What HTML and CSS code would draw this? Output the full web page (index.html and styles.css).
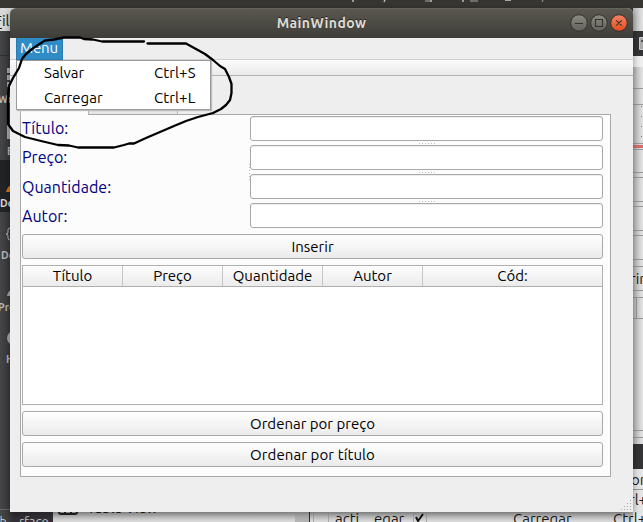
FILE: index.html
```html
<!DOCTYPE html>
<html lang="pt">
<head>
<meta charset="utf-8">
<title>MainWindow</title>
<link rel="stylesheet" href="styles.css">
</head>
<body>
<div class="desktop">
  <svg class="backdrop" width="643" height="522" viewBox="0 0 643 522">
    <defs>
      <linearGradient id="modes"><stop offset="0" stop-color="#454648"/><stop offset="1" stop-color="#353638"/></linearGradient>
      <linearGradient id="side"><stop offset="0" stop-color="#b7b7b7"/><stop offset="1" stop-color="#e4e4e4"/></linearGradient>
      <linearGradient id="under" x2="0" y2="1"><stop offset="0" stop-color="#aaa"/><stop offset="1" stop-color="#dedede"/></linearGradient>
    </defs>
    <rect width="643" height="522" fill="#373632"/>
    <path d="M353 0v2M385 0l-1 2M431 0v2M463 0v2" stroke="#bbb" stroke-width="1.500"/>
    <path d="M425 1h7M470 1h8M505 .5h6M543 0l-1 2" stroke="#a6a6a0"/>
    <path fill="#d8d8d8" d="M0 8h20v23H0z"/>
    <text x="-6" y="26" class="menu-text">File</text><path d="M0 28.500h2" stroke="#111"/>
    <path fill="url(#modes)" d="M0 31h12v491H0z"/>
    <path d="M0 55.500h10" stroke="#303133"/>
    <path fill="#222325" d="M0 160h12v52H0z"/>
    <path fill="#aaa" d="M7 68h4v5H7zM7 75h4v5H7zM7 82h4v5H7zM7 125h4v14H7z"/>
    <path fill="#d87613" d="M6 192q2-7 6-7v7z"/>
    <path fill="#a8a8a8" d="M7 296q1-5 4-6v6z"/>
    <circle cx="14" cy="338" r="7" fill="#aaa"/>
    <g class="mode-text">
      <text x="-2" y="103">We</text><text x="7" y="155">E</text><text x="0" y="207" fill="#ddd">De</text>
      <text x="1" y="259">De</text><text x="-2" y="311">Pro</text><text x="6" y="363">H</text>
      <path d="M10 228q-2 0-2 2v2q0 2-2 2 2 0 2 2v2q0 2 2 2" fill="none" stroke="#b8b8b8"/>
    </g>
    <path fill="url(#side)" d="M633 8h10v514h-10z"/>
    <path fill="#343436" d="M633 31h10v25h-10zM633 444h10v25h-10z"/>
    <path d="M639.500 37.500h5v12h-5z" fill="#aaa" stroke="#ccc"/><path d="M641 41h2" stroke="#555" stroke-width="2"/>
    <path fill="#eee" d="M633 56h10v11h-10z"/>
    <path stroke="#999" fill="none" d="M633 88.500h10M633 104.500h10M633 143.500h10M633 149.500h10M633 172.500h10M633 177.500h10M633 201.500h10M633 206.500h10M633 230.500h10M633 235.500h10M633 259.500h10M633 266.500h10M633 290.500h10M633 297.500h10M633 318.500h10M636.500 298v20M633 430.500h10M633 437.500h10"/>
    <path stroke="#777" stroke-dasharray="1 9" d="M641.500 106v34"/>
    <path fill="#dd6a6a" d="M633 145h10v3h-10z"/>
    <text x="630" y="284" class="menu-text">rir</text>
    <path fill="#e5e5e5" d="M633 469h10v53h-10z"/>
    <path d="M633 489.500h10" stroke="#999"/>
    <text x="631" y="485" class="menu-text">or</text>
    <text x="629" y="505" class="menu-text">rl+L</text>
    <path fill="url(#under)" d="M53 511h580v11H53z"/>
    <path fill="#333137" d="M12 511h41v11H12z"/>
    <path d="M0 509.500h53" stroke="#666"/>
    <text x="-8" y="526" class="side-text">ph</text><text x="19" y="526" class="side-text">rface</text>
    <path fill="none" stroke="#222" stroke-width="2" d="M59 508v4q0 2 2 2h14q2 0 2-2v-4M65 508v6M71 508v6"/>
    <text x="87" y="512.500" class="menu-text" textLength="71">Table View</text>
    <path fill="#b5b5b5" d="M295 511h14v11h-14z"/>
    <path stroke="#333" d="M309.500 511v11"/>
    <path stroke="#aaa" d="M313.500 511v11M328.500 511v11M413.500 511v11M426.500 511v11"/>
    <text x="335" y="524" class="menu-text">acti</text><text x="374" y="524" class="menu-text">egar</text>
    <path d="M416 517l2 4 5-7" fill="none" stroke="#111" stroke-width="2"/>
    <text x="513" y="524" class="menu-text">Carregar</text>
    <text x="613" y="524" class="menu-text">Ctrl+L</text>
  </svg>

  <main class="window">
    <header class="titlebar">
      <h1 class="title">MainWindow</h1>
      <svg class="controls" width="60" height="20" viewBox="0 0 60 20">
        <defs>
          <linearGradient id="gray" x2="0" y2="1"><stop offset="0" stop-color="#8b8a83"/><stop offset="1" stop-color="#62615a"/></linearGradient>
          <linearGradient id="close" x2="0" y2="1"><stop offset="0" stop-color="#f58363"/><stop offset="1" stop-color="#e24c1c"/></linearGradient>
        </defs>
        <g stroke="#33322e"><circle cx="10" cy="9" r="8.300" fill="url(#gray)"/><circle cx="30" cy="9" r="8.300" fill="url(#gray)"/><circle cx="50" cy="9" r="8.300" fill="url(#close)"/></g>
        <path d="M6 9.500h8M26.500 5.500h7v7h-7zM47.300 6.300l5.400 5.400M52.700 6.300l-5.400 5.400" fill="none" stroke="#33322e" stroke-width="1.100"/>
      </svg>
    </header>
    <nav class="menubar">
      <div class="menu"><span class="label">Menu</span></div>
      <div class="popup">
        <div class="item"><span class="name">Salvar</span><span class="key">Ctrl+S</span></div>
        <div class="item"><span class="name">Carregar</span><span class="key">Ctrl+L</span></div>
      </div>
    </nav>
    <div class="toolbar"></div>
    <section class="content">
      <div class="tabs"><div class="tab active"></div><div class="tab"><i class="mark"></i></div></div>
      <div class="pane">
        <form class="form">
          <div class="labels"><label for="titulo">Título:</label><label for="preco">Preço:</label><label for="quantidade">Quantidade:</label><label for="autor">Autor:</label></div>
          <div class="grip vertical"></div>
          <div class="fields">
            <input id="titulo"><div class="grip"></div>
            <input id="preco"><div class="grip"></div>
            <input id="quantidade"><div class="grip"></div>
            <input id="autor">
          </div>
        </form>
        <button class="button">Inserir</button>
        <div class="table">
          <div class="head"><span>Título</span><span>Preço</span><span>Quantidade</span><span>Autor</span><span>Cód:</span></div>
        </div>
        <button class="button">Ordenar por preço</button>
        <button class="button last">Ordenar por título</button>
      </div>
    </section>
    <svg class="resize" width="12" height="12" viewBox="0 0 12 12"><path stroke="#aaa" stroke-dasharray="1 2" d="M10 1.500h2M7 4.500h5M4 7.500h8M1 10.500h11"/></svg>
  </main>

  <svg class="ink" width="643" height="522" viewBox="0 0 643 522">
    <path d="M144 41.500L102 41.500 93 39.500 84 39 80 37.500H64L54 39.500 45 40.500 38 45 32 49 26 54 22 59 19 68 13 78 9 86 8 95 8 124 13 131 25 137 41 141 58 145 69 145.500 78 147.500H114L124 145 129 143.500 134 143.500 146 138 160 132 174 126 186 121 198 117 213 113 221 109 226 105 230 100 231.500 93V84L229 77 225 69 220 66 213 60 205 54 196 49 186 43.500H147.500"/>
  </svg>
</div>
</body>
</html>
```
FILE: styles.css
```css
* { box-sizing: border-box; }
body { margin: 0; overflow: hidden; font: 15px/20px Ubuntu, "Noto Sans", sans-serif; color: #000; }
.desktop { position: relative; width: 643px; height: 522px; overflow: hidden; }
.backdrop { display: block; }
.menu-text { font-size: 15px; fill: #181818; }
.mode-text { font-size: 10.5px; font-weight: bold; fill: #b8b8b8; }
.side-text { font-size: 13px; fill: #c4c4c4; }
.window {
  position: absolute; left: 10px; top: 8px; width: 623px; height: 504px;
  display: flex; flex-direction: column; background: #eee;
  border-radius: 6px 6px 0 0; box-shadow: 0 2px 7px rgba(0, 0, 0, .4);
}
.titlebar {
  height: 30px; flex: none; display: grid; grid-template-columns: 60px 1fr 60px; align-items: center;
  padding: 0 4px; border-radius: 6px 6px 0 0; border-top: 1px solid #66645a;
  background: linear-gradient(#59574f, #3e3d39);
}
.title {
  grid-column: 2; margin: 0; padding-bottom: 2px; text-align: center; color: #dfdbd2; font-size: 14px;
  line-height: 20px; letter-spacing: .4px; text-shadow: 0 -1px #222;
}
.menubar { position: relative; height: 22px; flex: none; padding-left: 6px; border-bottom: 1px solid #cfcfcf; }
.menu { width: 47px; height: 22px; padding-left: 3px; background: #308cc6; border: 1px solid #2a7bae; border-top: 0; color: #fff; }
.menu .label { letter-spacing: -.1px; }
.popup {
  position: absolute; z-index: 2; left: 6px; top: 22px; width: 195px; height: 50px;
  background: #fff; border: 1px solid #9b9b9b; box-shadow: 1px 1px 1px #bbb;
}
.item { display: flex; height: 25px; line-height: 24px; padding-left: 27px; }
.name { width: 110px; }
.key { letter-spacing: .1px; }
.toolbar { height: 16px; flex: none; background: linear-gradient(#fbfbfb, #ebebeb); border-bottom: 1px solid #b1b1b1; }
.content { flex: none; padding: 13px 22px 0 10px; }
.tabs { display: flex; height: 25px; }
.tab { display: flex; align-items: flex-end; width: 89px; height: 25px; padding: 0 0 4px 42px; background: #e6e6e6; border: 1px solid #b5b5b5; border-width: 1px 1px 0 0; }
.tab.active { width: 69px; height: 26px; margin-bottom: -1px; padding: 0; background: #fcfcfc; border-width: 1px; border-bottom: 0; z-index: 1; }
.mark { width: 2px; height: 1px; background: #111; }
.pane { height: 363px; padding: 1px 7px 0 1px; background: #fcfcfc; border: 1px solid #a9a9a9; }
.form { display: flex; height: 112px; margin: 0; }
.labels { width: 226px; display: grid; grid-template-rows: repeat(4, 29.3px); color: #00007f; font-size: 16px; letter-spacing: .03px; }
.labels label { line-height: 24px; }
.grip { height: 4px; display: flex; justify-content: center; align-items: center; }
.grip::after { content: ""; width: 16px; height: 1px; background: repeating-linear-gradient(90deg, #bbb 0 1px, transparent 1px 3px); }
.vertical { width: 2px; height: 112px; }
.vertical::after { width: 1px; height: 16px; flex: none; background: repeating-linear-gradient(#bbb 0 1px, transparent 1px 3px); }
.fields { flex: 1; display: flex; flex-direction: column; }
.fields input { width: 100%; height: 25px; flex: none; padding: 0; background: #fff; border: 1px solid #a8a8a8; border-radius: 3px; outline: 0; box-shadow: inset 0 1px #eee; }
.button {
  display: block; width: 100%; height: 25px; margin: 6px 0; padding: 0; color: #000;
  font: inherit; line-height: 22px; border: 1px solid #a8a8a8; border-radius: 3px;
  background: linear-gradient(#fefefe, #ebebeb);
}
.last { letter-spacing: .1px; }
.table { height: 140px; background: #fff; border: 1px solid #b0b0b0; }
.head { display: grid; grid-template-columns: 100px 100px 100px 100px 1fr; height: 21px; border-bottom: 1px solid #b0b0b0; background: linear-gradient(#fdfdfd, #ebebeb); }
.head span { text-align: center; line-height: 20px; border-right: 1px solid #c6c6c6; }
.head span:last-child { border: 0; }
.resize { position: absolute; right: 1px; bottom: 1px; }
.ink { position: absolute; inset: 0; z-index: 4; pointer-events: none; fill: none; stroke: #000; stroke-width: 2.3; stroke-linejoin: round; stroke-linecap: round; }
```
